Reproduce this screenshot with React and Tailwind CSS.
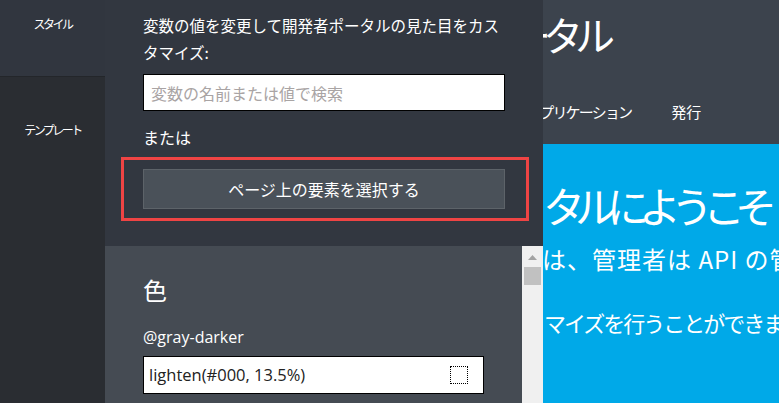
export default function App() {
  const jp = { fontFamily: '"Noto Sans CJK JP", "Noto Sans", sans-serif' };
  const latin = { fontFamily: '"Open Sans", "Noto Sans", sans-serif' };
  return (
    <div className="flex h-[403px] w-[779px] overflow-hidden" style={jp}>
      {/* sidebar */}
      <div className="flex w-[105px] flex-col">
        <div className="flex h-[76px] justify-center bg-[#31363f] pt-[15px] text-[12px] tracking-[-2.5px] text-white">
          <span>スタイル</span>
        </div>
        <div className="flex flex-1 justify-center border-t border-[#23262a] bg-[#2a2d32] pt-[44px] text-[12px] tracking-[-2.5px] text-white">
          <span>テンプレート</span>
        </div>
      </div>

      {/* middle panel */}
      <div className="flex w-[438px] flex-col">
        <div className="h-[246px] bg-[#323740] pl-[38px] pt-[12px]">
          <p className="w-[362px] text-[15.5px] leading-[27px] text-white">
            変数の値を変更して開発者ポータルの見た目をカスタマイズ:
          </p>
          <div className="mt-[8px] flex h-[37px] w-[362px] items-center border border-black bg-white px-[7px] text-[16px] text-[#a9a4a4]">
            変数の名前または値で検索
          </div>
          <p className="mt-[13px] text-[16px] leading-[27px] text-white">または</p>
          <div className="ml-[-22px] mt-[6px] w-[408px] border-[3px] border-[#ef4444] bg-[#323740] px-[19px] py-[9px]">
            <div className="flex h-[40px] w-[362px] items-center justify-center border border-[#5d6369] bg-[#4a5159] text-[16px] text-white">
              ページ上の要素を選択する
            </div>
          </div>
        </div>
        <div className="flex flex-1 bg-[#454b53]">
          <div className="flex-1 pl-[38px] pt-[28px]">
            <div className="text-[24px] leading-[32px] text-white">色</div>
            <div className="mt-[20px] text-[16px] leading-[22px] text-white" style={latin}>
              @gray-darker
            </div>
            <div className="mt-[8px] flex h-[38px] w-[341px] items-center justify-between border border-black bg-white pl-[5px] pr-[15px] text-[16.5px] text-[#222]" style={latin}>
              <span>lighten(#000, 13.5%)</span>
              <span className="h-[18px] w-[18px] border border-dotted border-black" />
            </div>
          </div>
          <div className="flex w-[21px] flex-col items-center bg-[#f0f0f0] pt-[9px]">
            <svg width="9" height="5" viewBox="0 0 9 5"><path d="M4.5 0L9 5H0z" fill="#a3a3a3" /></svg>
            <div className="mt-[7px] h-[18px] w-[17px] bg-[#c1c1c1]" />
          </div>
        </div>
      </div>

      {/* right preview */}
      <div className="flex flex-1 flex-col overflow-hidden">
        <div className="h-[144px] overflow-hidden bg-[#3c434d] text-white">
          <div className="ml-[-32px] mt-[8px] whitespace-nowrap text-[40px] leading-[52px] tracking-[-8px]">ータル</div>
          <div className="mt-[41px] flex whitespace-nowrap text-[15px] tracking-[-1.8px]">
            <span className="ml-[-17px]">アプリケーション</span>
            <span className="ml-[40px] tracking-[0px]">発行</span>
          </div>
        </div>
        <div className="flex-1 overflow-hidden bg-[#00a9e8] text-white">
          <div className="mt-[32px] whitespace-nowrap text-[42px] leading-[58px] tracking-[-10px]">タルにようこそ</div>
          <div className="ml-[-1px] mt-[10px] whitespace-nowrap text-[24px] leading-[30px] tracking-[1px]">は、管理者は API の管理</div>
          <div className="ml-[1px] mt-[33px] whitespace-nowrap text-[22px] leading-[30px] tracking-[-2px]">マイズを行うことができます</div>
        </div>
      </div>
    </div>
  );
}
